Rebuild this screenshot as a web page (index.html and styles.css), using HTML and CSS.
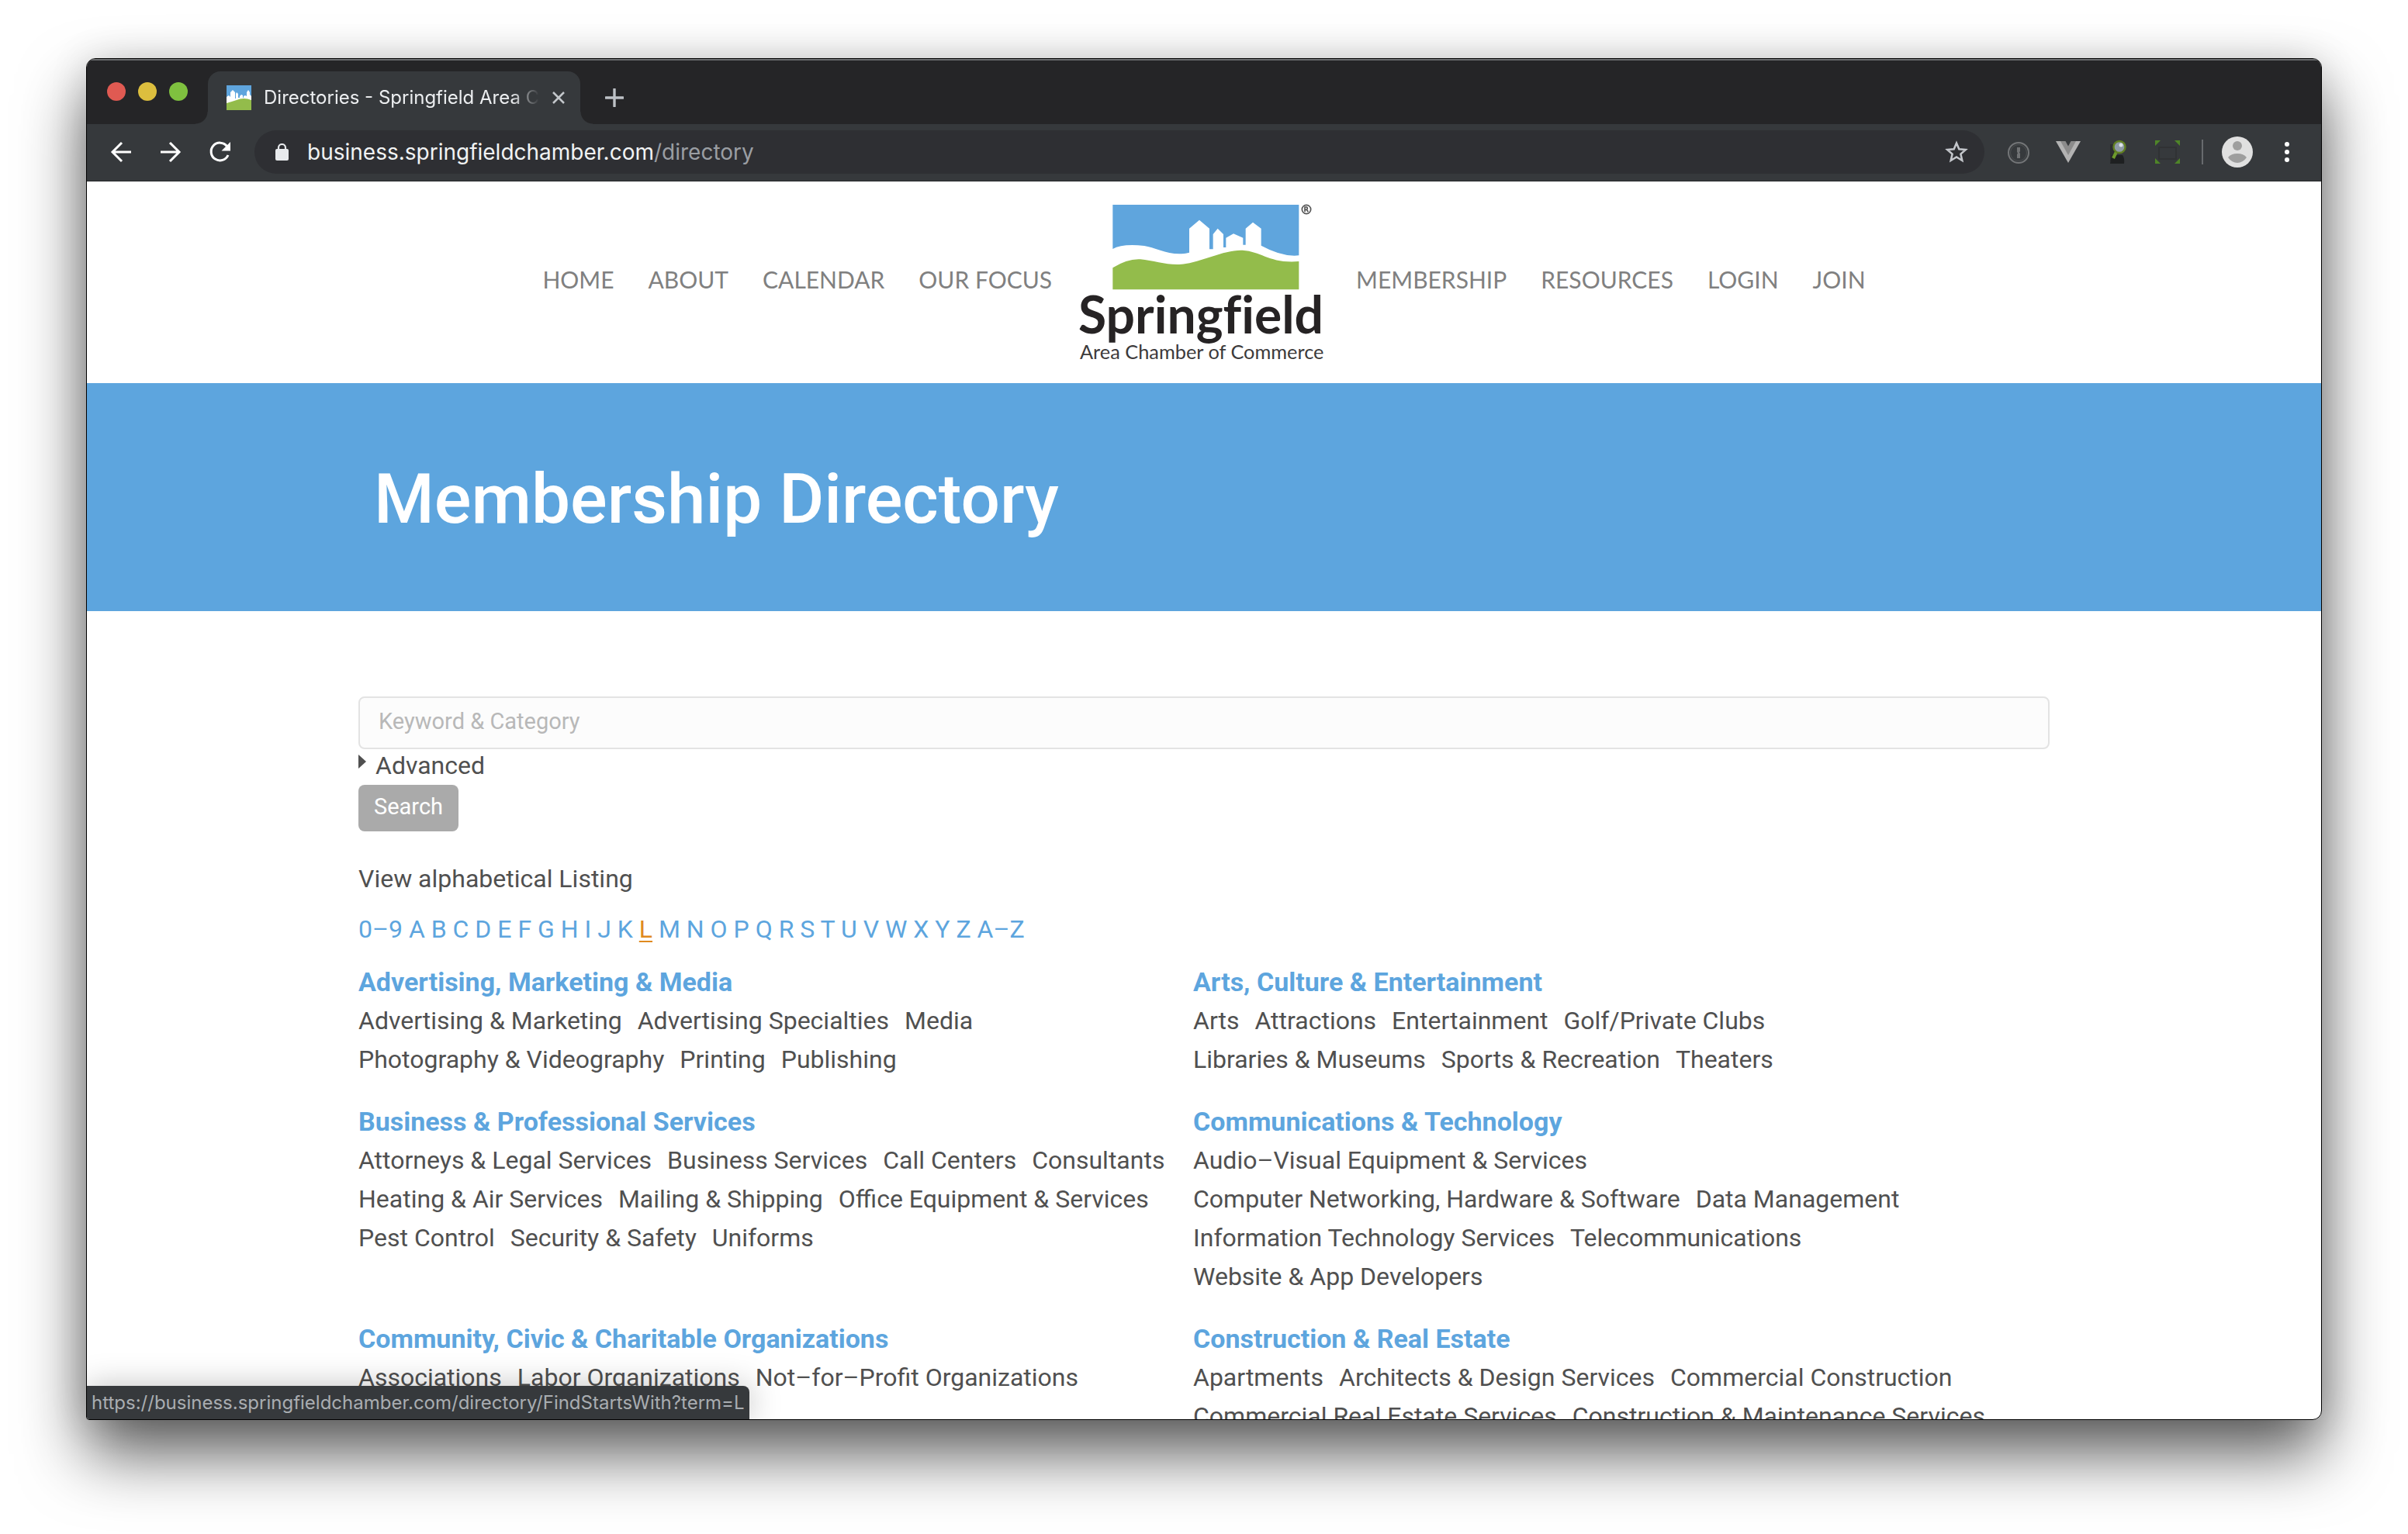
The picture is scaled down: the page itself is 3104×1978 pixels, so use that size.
FILE: index.html
```html
<!DOCTYPE html>
<html lang="en">
<head>
<meta charset="utf-8">
<title>Directories - Springfield Area Chamber</title>
<link rel="stylesheet" href="styles.css">
</head>
<body>
<div class="window">
  <div class="tabstrip">
    <div class="lights">
      <span class="light light-close"></span>
      <span class="light light-min"></span>
      <span class="light light-max"></span>
    </div>
    <div class="tab">
      <svg class="favicon" viewBox="0 0 32 32">
        <rect width="32" height="32" fill="#fff"/>
        <path d="M0 0H32V14L30 12V9L28 6L26 9V14L24 13L22 14V16H21V13L19 12L17 14V16H15V11L13 9L12 11V17H11V9L8 6L5 9V15L3 13L0 15Z" fill="#5fa5dd"/>
        <path d="M0 23Q7 21 13 19Q22 15 32 19V32H0Z" fill="#93bc4b"/>
      </svg>
      <span class="tab-title">Directories - Springfield Area C</span>
      <button class="icon-btn tab-close" aria-label="Close tab">
        <svg viewBox="0 0 18 18"><path d="M2 2L16 16M16 2L2 16" stroke="#c3c7cb" stroke-width="2.500"/></svg>
      </button>
    </div>
    <button class="icon-btn new-tab" aria-label="New tab">
      <svg viewBox="0 0 24 24"><path d="M12 1V23M1 12H23" stroke="#bdc1c6" stroke-width="3.4" stroke-linecap="round"/></svg>
    </button>
  </div>

  <div class="toolbar">
    <div class="tools tools-nav">
      <button class="icon-btn tool" aria-label="Back">
        <svg viewBox="0 0 32 32"><path d="M29 16H5M17 4L5 16L17 28" fill="none" stroke="#fff" stroke-width="3"/></svg>
      </button>
      <button class="icon-btn tool" aria-label="Forward">
        <svg viewBox="0 0 32 32"><path d="M3 16H27M15 4L27 16L15 28" fill="none" stroke="#fff" stroke-width="3"/></svg>
      </button>
      <button class="icon-btn tool" aria-label="Reload">
        <svg viewBox="0 0 32 32"><path d="M26 20A11.4 11.4 0 1 1 24.5 8.5" fill="none" stroke="#fff" stroke-width="3"/><path d="M29 3V14.5H17.5Z" fill="#fff"/></svg>
      </button>
    </div>
    <div class="omnibox">
      <svg class="lock" viewBox="0 0 17 22"><rect y="7" width="17" height="15" rx="2" fill="#e8eaed"/><path d="M4 8V5.5A4.500 4.500 0 0 1 13 5.500V8" fill="none" stroke="#e8eaed" stroke-width="2.200"/></svg>
      <span class="url">business.springfieldchamber.com<span class="url-path">/directory</span></span>
      <button class="icon-btn tool" aria-label="Bookmark this page">
        <svg viewBox="0 0 32 32"><path d="M16 4.500L19.300 12.300L27.800 13L21.400 18.600L23.300 27L16 22.500L8.700 27L10.600 18.600L4.200 13L12.700 12.300Z" fill="none" stroke="#c4c7cc" stroke-width="2.500"/></svg>
      </button>
    </div>
    <div class="tools">
      <svg class="tool" viewBox="0 0 32 32"><circle cx="16" cy="17" r="13" fill="none" stroke="#737577" stroke-width="2"/><circle cx="16" cy="17" r="10.500" fill="none" stroke="#4d5052" stroke-width="1"/><path d="M14 10H18V15L17 16.500L18 18V24H14V19L15 17.500L14 16Z" fill="#707274"/></svg>
      <svg class="tool" viewBox="0 0 32 32"><path d="M0 2H32L16 30Z" fill="#b3b3b3"/><path d="M6 2H26L16 20Z" fill="#8b8b8b"/><path d="M12.500 2H19.500L16 8.500Z" fill="#36393c"/></svg>
      <svg class="tool" viewBox="0 0 32 32"><path d="M6 6H12V28H6Z" fill="#2b2d2f"/><path d="M8 20H22Q25 24 24 31H6Z" fill="#1e2021"/><path d="M14 16L10 24" stroke="#6d9a2c" stroke-width="4"/><circle cx="18" cy="9.500" r="7.500" fill="#8e9aa5" stroke="#617f22" stroke-width="2.400"/><circle cx="20" cy="7" r="2.500" fill="#dde3e8"/></svg>
      <svg class="tool" viewBox="0 0 32 32"><path d="M0 1H7L0 8ZM32 1H25L32 8ZM0 31H7L0 24ZM32 31H25L32 24Z" fill="#4f8528"/><path d="M5 10H27V25H5Z" fill="none" stroke="#303234" stroke-width="2"/></svg>
    </div>
    <span class="divider"></span>
    <svg class="avatar" viewBox="0 0 40 40"><circle cx="20" cy="20" r="20" fill="#e0e0e0"/><circle cx="20" cy="12" r="6" fill="#9e9e9e"/><path d="M8 27Q12 22 20 22T32 27Q27 34 20 34T8 27Z" fill="#9e9e9e"/></svg>
    <button class="icon-btn tool menu" aria-label="Menu">
      <svg viewBox="0 0 32 32"><g fill="#fff"><circle cx="16" cy="6" r="3"/><circle cx="16" cy="16" r="3"/><circle cx="16" cy="26" r="3"/></g></svg>
    </button>
  </div>

  <div class="page">
    <header class="site-header">
      <nav class="nav">
        <a href="#">HOME</a><a href="#">ABOUT</a><a href="#">CALENDAR</a><a href="#">OUR FOCUS</a>
      </nav>
      <a class="logo" href="#">
        <svg viewBox="96 72 942 600">
          <path d="M223 72H943V268Q880 275 797 230V164L765 140L737 164V227H727V200L690 184L661 200V237H651V186L629 164L611 186V244H597V164L558 131L519 164V257C450 275 390 237 345 231Q260 222 223 243Z" fill="#5fa5dd"/>
          <path d="M223 316Q280 280 330 283C380 288 430 305 480 303C560 298 650 245 725 248C800 253 830 300 943 291V400H223Z" fill="#93bc4b"/>
          <g fill="none" stroke="#555" stroke-width="5"><circle cx="972" cy="90" r="17"/><path d="M966 100V81H973Q979 86 973 91H966M973 91L979 100"/></g>
          <text class="logo-name" x="90" y="570">Springfield</text>
          <text class="logo-sub" x="96" y="670">Area Chamber of Commerce</text>
        </svg>
      </a>
      <nav class="nav">
        <a href="#">MEMBERSHIP</a><a href="#">RESOURCES</a><a href="#">LOGIN</a><a href="#">JOIN</a>
      </nav>
    </header>

    <div class="hero"><h1>Membership Directory</h1></div>

    <main class="content">
      <form class="search" onsubmit="return false">
        <input class="search-input" type="text" placeholder="Keyword &amp; Category" aria-label="Keyword and category">
        <a class="advanced" href="#"><svg viewBox="0 0 10 18"><path d="M0 0L10 9L0 18Z" fill="#505050"/></svg>Advanced</a>
        <button class="search-btn">Search</button>
      </form>
      <p class="listing-label">View alphabetical Listing</p>
      <p class="alphabet">
        <a href="#">0–9</a> <a href="#">A</a> <a href="#">B</a> <a href="#">C</a> <a href="#">D</a> <a href="#">E</a> <a href="#">F</a> <a href="#">G</a> <a href="#">H</a> <a href="#">I</a> <a href="#">J</a> <a href="#">K</a> <a class="current" href="#">L</a> <a href="#">M</a> <a href="#">N</a> <a href="#">O</a> <a href="#">P</a> <a href="#">Q</a> <a href="#">R</a> <a href="#">S</a> <a href="#">T</a> <a href="#">U</a> <a href="#">V</a> <a href="#">W</a> <a href="#">X</a> <a href="#">Y</a> <a href="#">Z</a> <a href="#">A–Z</a>
      </p>
      <div class="categories">
        <section>
          <h2><a href="#">Advertising, Marketing &amp; Media</a></h2>
          <ul><li><a href="#">Advertising &amp; Marketing</a></li><li><a href="#">Advertising Specialties</a></li><li><a href="#">Media</a></li><li><a href="#">Photography &amp; Videography</a></li><li><a href="#">Printing</a></li><li><a href="#">Publishing</a></li></ul>
        </section>
        <section>
          <h2><a href="#">Arts, Culture &amp; Entertainment</a></h2>
          <ul><li><a href="#">Arts</a></li><li><a href="#">Attractions</a></li><li><a href="#">Entertainment</a></li><li><a href="#">Golf/Private Clubs</a></li><li><a href="#">Libraries &amp; Museums</a></li><li><a href="#">Sports &amp; Recreation</a></li><li><a href="#">Theaters</a></li></ul>
        </section>
        <section>
          <h2><a href="#">Business &amp; Professional Services</a></h2>
          <ul><li><a href="#">Attorneys &amp; Legal Services</a></li><li><a href="#">Business Services</a></li><li><a href="#">Call Centers</a></li><li><a href="#">Consultants</a></li><li><a href="#">Heating &amp; Air Services</a></li><li><a href="#">Mailing &amp; Shipping</a></li><li><a href="#">Office Equipment &amp; Services</a></li><li><a href="#">Pest Control</a></li><li><a href="#">Security &amp; Safety</a></li><li><a href="#">Uniforms</a></li></ul>
        </section>
        <section>
          <h2><a href="#">Communications &amp; Technology</a></h2>
          <ul><li><a href="#">Audio–Visual Equipment &amp; Services</a></li><li><a href="#">Computer Networking, Hardware &amp; Software</a></li><li><a href="#">Data Management</a></li><li><a href="#">Information Technology Services</a></li><li><a href="#">Telecommunications</a></li><li><a href="#">Website &amp; App Developers</a></li></ul>
        </section>
        <section>
          <h2><a href="#">Community, Civic &amp; Charitable Organizations</a></h2>
          <ul><li><a href="#">Associations</a></li><li><a href="#">Labor Organizations</a></li><li><a href="#">Not–for–Profit Organizations</a></li></ul>
        </section>
        <section>
          <h2><a href="#">Construction &amp; Real Estate</a></h2>
          <ul><li><a href="#">Apartments</a></li><li><a href="#">Architects &amp; Design Services</a></li><li><a href="#">Commercial Construction</a></li><li><a href="#">Commercial Real Estate Services</a></li><li><a href="#">Construction &amp; Maintenance Services</a></li></ul>
        </section>
      </div>
    </main>
  </div>
  <div class="status">https://business.springfieldchamber.com/directory/FindStartsWith?term=L</div>
</div>
</body>
</html>
```
FILE: styles.css
```css
* { box-sizing: border-box; }

body {
  margin: 0;
  height: 100vh;
  padding: 75px 111px 147px;
  background: #fff;
  color: #505050;
  font: 32px/50px Roboto, "Liberation Sans", sans-serif;
  overflow: hidden;
}
a { color: inherit; text-decoration: none; }
svg { display: block; }
h1, h2, p, ul { margin: 0; padding: 0; }
ul { list-style: none; }

.window {
  position: relative;
  display: flex;
  flex-direction: column;
  height: 100%;
  border: 1px solid #000;
  border-radius: 12px 12px 12px 4px;
  background: #fff;
  overflow: hidden;
  box-shadow: 0 44px 84px rgba(0, 0, 0, .64), 0 0 50px rgba(0, 0, 0, .12);
}

.icon-btn {
  flex: none;
  padding: 0;
  border: 0;
  background: none;
}

/* Browser chrome */
.tabstrip {
  flex: none;
  display: flex;
  align-items: flex-end;
  height: 84px;
  padding-left: 26px;
  background: #252527;
  border-top: 2px solid #6a6c6e;
}
.lights {
  display: flex;
  gap: 16px;
  height: 54px;
  margin-right: 26px;
}
.light { width: 24px; height: 24px; border-radius: 50%; }
.light-close { background: #e05a52; }
.light-min { background: #dcbe3e; }
.light-max { background: #7fc13f; }
.tab {
  position: relative;
  display: flex;
  align-items: center;
  width: 480px;
  height: 68px;
  padding: 0 22px 0 24px;
  border-radius: 16px 16px 0 0;
  background: #36393c;
}
.tab::before, .tab::after {
  content: "";
  position: absolute;
  bottom: 0;
  width: 16px;
  height: 16px;
}
.tab::before { right: 100%; background: radial-gradient(circle at 0 0, transparent 15px, #36393c 16px); }
.tab::after { left: 100%; background: radial-gradient(circle at 100% 0, transparent 15px, #36393c 16px); }
.favicon { flex: none; width: 32px; height: 32px; margin-right: 16px; }
.tab-title {
  flex: 1;
  color: #eceef0;
  font: 24px/32px Inter, sans-serif;
  white-space: nowrap;
  -webkit-mask-image: linear-gradient(90deg, #000 90%, transparent);
  mask-image: linear-gradient(90deg, #000 90%, transparent);
}
.tab-close { width: 18px; height: 18px; margin-left: 16px; }
.new-tab { width: 24px; height: 24px; margin: 0 0 22px 32px; }

.toolbar {
  flex: none;
  display: flex;
  align-items: center;
  height: 74px;
  padding: 0 28px 2px;
  background: #36393c;
  border-bottom: 1px solid #26282a;
}
.tools { display: flex; gap: 32px; }
.tool { flex: none; width: 32px; height: 32px; }
.omnibox {
  flex: 1;
  display: flex;
  align-items: center;
  height: 56px;
  margin: 0 28px;
  padding: 0 20px 0 27px;
  border-radius: 28px;
  background: #2e2f33;
}
.lock { flex: none; width: 17px; height: 22px; margin-right: 24px; }
.url { flex: 1; color: #f1f3f4; font: 28px/40px Inter, sans-serif; }
.url-path { color: #9a9ea3; }
.divider { width: 2px; height: 32px; margin: 0 24px 0 28px; background: #686b6e; }
.avatar { flex: none; width: 40px; height: 40px; margin-right: 28px; }

/* Site */
.page { flex: 1; min-height: 0; overflow: hidden; }
.site-header {
  display: flex;
  justify-content: center;
  align-items: center;
  height: 260px;
}
.nav { display: flex; padding-bottom: 8px; }
.nav a {
  padding: 0 22px;
  color: #808080;
  font: 30px/40px Lato, sans-serif;
}
.logo { padding: 0 20px 0 14px; }
.logo svg { width: 314px; height: 200px; overflow: visible; }
.logo-name { font: 700 198px Lato, sans-serif; font-variant-ligatures: none; fill: #262324; }
.logo-sub { font: 76px Lato, sans-serif; fill: #3c3a3b; }

.hero {
  display: flex;
  align-items: center;
  height: 294px;
  padding: 6px 370px 0;
  background: #5da5de;
}
h1 { color: #fff; font-size: 89px; font-weight: 500; line-height: 100px; }

.content { padding: 110px 350px 0; }
.search { display: flex; flex-direction: column; align-items: flex-start; }
.search-input {
  width: 100%;
  height: 68px;
  padding: 0 24px 4px;
  border: 2px solid #e3e3e3;
  border-radius: 8px;
  background: #fcfcfc;
  color: #505050;
  font: 29px Roboto, sans-serif;
}
.search-input::placeholder { color: #b8b8b8; opacity: 1; }
.advanced { display: flex; gap: 12px; margin-bottom: 4px; line-height: 42px; }
.advanced svg { width: 10px; height: 18px; margin-top: 7px; }
.search-btn {
  height: 60px;
  padding: 0 20px 4px;
  border: 0;
  border-radius: 8px;
  background: #aaa;
  color: #fff;
  font: 29px Roboto, sans-serif;
}
.listing-label { margin-top: 36px; }
.alphabet { margin: 15px 0 18px; color: #5da5de; }
.current {
  color: #e08a1e;
  text-decoration: underline;
  text-decoration-thickness: 2px;
  text-underline-offset: 4px;
}
.categories {
  display: grid;
  grid-template-columns: 1fr 1fr;
  gap: 30px 28px;
  padding-right: 56px;
}
.categories h2 { color: #5da5de; font-size: 34px; line-height: 50px; font-weight: 700; }
.categories ul { display: flex; flex-wrap: wrap; column-gap: 20px; }
.categories li { white-space: nowrap; }

.status {
  position: absolute;
  left: 0;
  bottom: 0;
  height: 43px;
  padding: 0 6px;
  border-top-right-radius: 8px;
  background: #36393c;
  color: #a9adb1;
  font: 24px/43px Inter, sans-serif;
  box-shadow: 0 0 40px rgba(0, 0, 0, .25);
}
```
